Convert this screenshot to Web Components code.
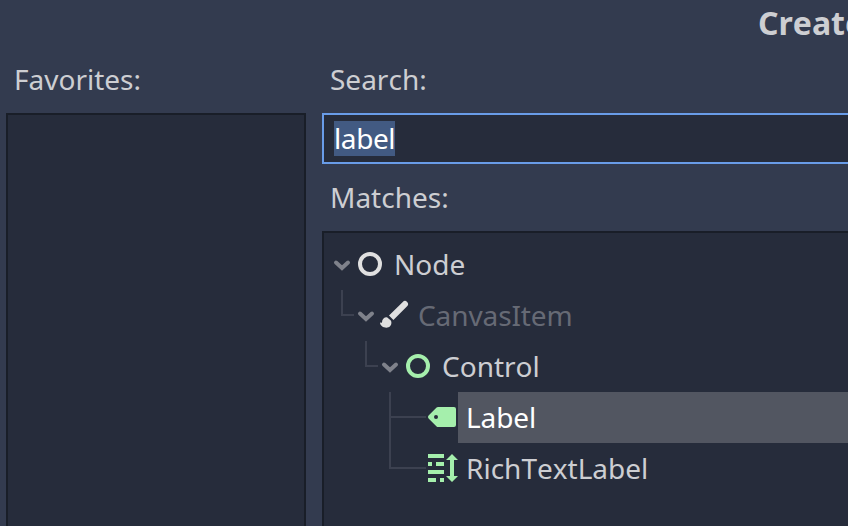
<!DOCTYPE html>
<html lang="en">
<head>
<meta charset="utf-8">
<title>Create New Node</title>
<style>
html,body{margin:0;height:100%;overflow:hidden;background:#333b4f}
body{font:28px "Noto Sans","Open Sans",sans-serif;color:#cdced2;font-kerning:none}
</style>
</head>
<body>
<create-dialog heading="Create New Node">
  <titled-section slot="side" heading="Favorites:"><item-panel></item-panel></titled-section>
  <titled-section slot="main" class="search" heading="Search:"><search-field value="label"></search-field></titled-section>
  <titled-section slot="main" class="matches" heading="Matches:">
    <item-panel>
      <tree-row depth="0" icon="node" open>Node</tree-row>
      <tree-row depth="1" icon="brush" open disabled>CanvasItem</tree-row>
      <tree-row depth="2" icon="control" open>Control</tree-row>
      <tree-row depth="3" icon="label" more selected>Label</tree-row>
      <tree-row depth="3" icon="rich">RichTextLabel</tree-row>
    </item-panel>
  </titled-section>
</create-dialog>
<script>
class CreateDialog extends HTMLElement {
  constructor() {
    super();
    this.attachShadow({mode: 'open'}).innerHTML = `
      <style>
        :host{display:flex;flex-direction:column;height:526px;box-sizing:border-box;overflow:hidden}
        header{height:48px;line-height:46px;font-size:32px;font-weight:700;white-space:nowrap;padding-left:758px}
        main{flex:1;display:grid;grid-template-columns:300px 1fr;gap:16px;padding-left:6px;margin-right:-8px;min-height:0}
        .side,.main{display:flex;flex-direction:column;min-height:0}
        ::slotted(titled-section){flex:1}
        ::slotted(.search){flex:none}
        ::slotted(.matches){--head:67px;--line:67px}
      </style>
      <header></header>
      <main><div class="side"><slot name="side"></slot></div><div class="main"><slot name="main"></slot></div></main>`;
    this.shadowRoot.querySelector('header').textContent = this.getAttribute('heading');
  }
}
class TitledSection extends HTMLElement {
  constructor() {
    super();
    this.attachShadow({mode: 'open'}).innerHTML = `
      <style>
        :host{display:flex;flex-direction:column;min-height:0}
        .title{height:var(--head,65px);line-height:var(--line,63px);padding-left:8px;box-sizing:border-box}
        ::slotted(item-panel){flex:1}
      </style>
      <div class="title"></div><slot></slot>`;
    this.shadowRoot.querySelector('.title').textContent = this.getAttribute('heading');
  }
}
class ItemPanel extends HTMLElement {
  constructor() {
    super();
    this.attachShadow({mode: 'open'}).innerHTML = `
      <style>:host{display:block;box-sizing:border-box;background:#262c3b;border:2px solid #191e28;border-bottom:0;padding:6px 0 0 6px}</style>
      <slot></slot>`;
  }
}
class SearchField extends HTMLElement {
  constructor() {
    super();
    this.attachShadow({mode: 'open'}).innerHTML = `
      <style>
        :host{display:flex;align-items:center;height:51px;box-sizing:border-box;background:#262c3b;border:2px solid #699ce8;padding-left:10px}
        span{height:35px;line-height:35px;background:#425a82;color:#fff;letter-spacing:-.4px}
      </style>
      <span></span>`;
    this.shadowRoot.querySelector('span').textContent = this.getAttribute('value');
  }
}
const ICONS = {
  node: '<circle cx="8" cy="8" r="5" fill="none" stroke="#e0e0e0" stroke-width="2"/>',
  control: '<circle cx="8" cy="8" r="5" fill="none" stroke="#a5efac" stroke-width="2"/>',
  brush: '<g fill="#e0e0e0"><path d="M5.5 8.3 12.4 1.45a1.5 1.5 0 0 1 2.15 2.15L7.7 10.5Z"/><path d="M4.5 9.15C3 9.1 2 10.1 2 11.7c-.3.2-.6.2-1 .1.1 1.6 1.6 2.6 3.2 2.6 1.5 0 2.5-1 2.5-2.6 0-.4-.1-.7-.3-1Z"/></g>',
  label: '<path fill="#a5efac" fill-rule="evenodd" d="M6 3a1 1 0 0 0-.707.293l-4 4a1 1 0 0 0 0 1.414l4 4A1 1 0 0 0 6 13h8a1 1 0 0 0 1-1V4a1 1 0 0 0-1-1ZM5 7a1 1 0 0 1 0 2 1 1 0 0 1 0-2Z"/>',
  rich: '<path fill="#a5efac" d="M1 1h8v2H1ZM1 5h2v2H1ZM5 5h4v2H5ZM1 9h8v2H1ZM1 13h4v2H1ZM7 13h2v2H7ZM13 1l-3 3h2v8h-2l3 3 3-3h-2V4h2Z"/>'
};
class TreeRow extends HTMLElement {
  constructor() {
    super();
    const depth = +this.getAttribute('depth');
    const open = this.hasAttribute('open');
    const width = depth * 24 + 24;
    const x = depth * 24 - 12;
    const end = open ? depth * 24 : width;
    const guide = depth
      ? `<path d="M${x} 0V${this.hasAttribute('more') ? 51 : 26}M${x + 1} 25H${end}" stroke="#3c4150" stroke-width="2"/>` : '';
    const a = width - 12;
    const arrow = open
      ? `<path d="M${a - 6} 23.5l6 5.5 6-5.5" stroke="#7f828b" stroke-width="4" stroke-linecap="round"/>` : '';
    this.attachShadow({mode: 'open'}).innerHTML = `
      <style>
        :host{display:flex;align-items:center;height:51px}
        svg{display:block;flex:none}
        .icon{margin-bottom:1px}
        .text{flex:1;padding-left:8px;line-height:51px;white-space:nowrap}
        :host([disabled]) .text{color:#666a75;letter-spacing:-.1px}
        :host([selected]) .text{background:#525661;color:#fff;letter-spacing:-.1px}
      </style>
      <svg width="${width}" height="51" fill="none">${guide}${arrow}</svg>
      <svg class="icon" width="32" height="32" viewBox="0 0 16 16">${ICONS[this.getAttribute('icon')]}</svg>
      <div class="text"><slot></slot></div>`;
  }
}
customElements.define('create-dialog', CreateDialog);
customElements.define('titled-section', TitledSection);
customElements.define('item-panel', ItemPanel);
customElements.define('search-field', SearchField);
customElements.define('tree-row', TreeRow);
</script>
</body>
</html>
